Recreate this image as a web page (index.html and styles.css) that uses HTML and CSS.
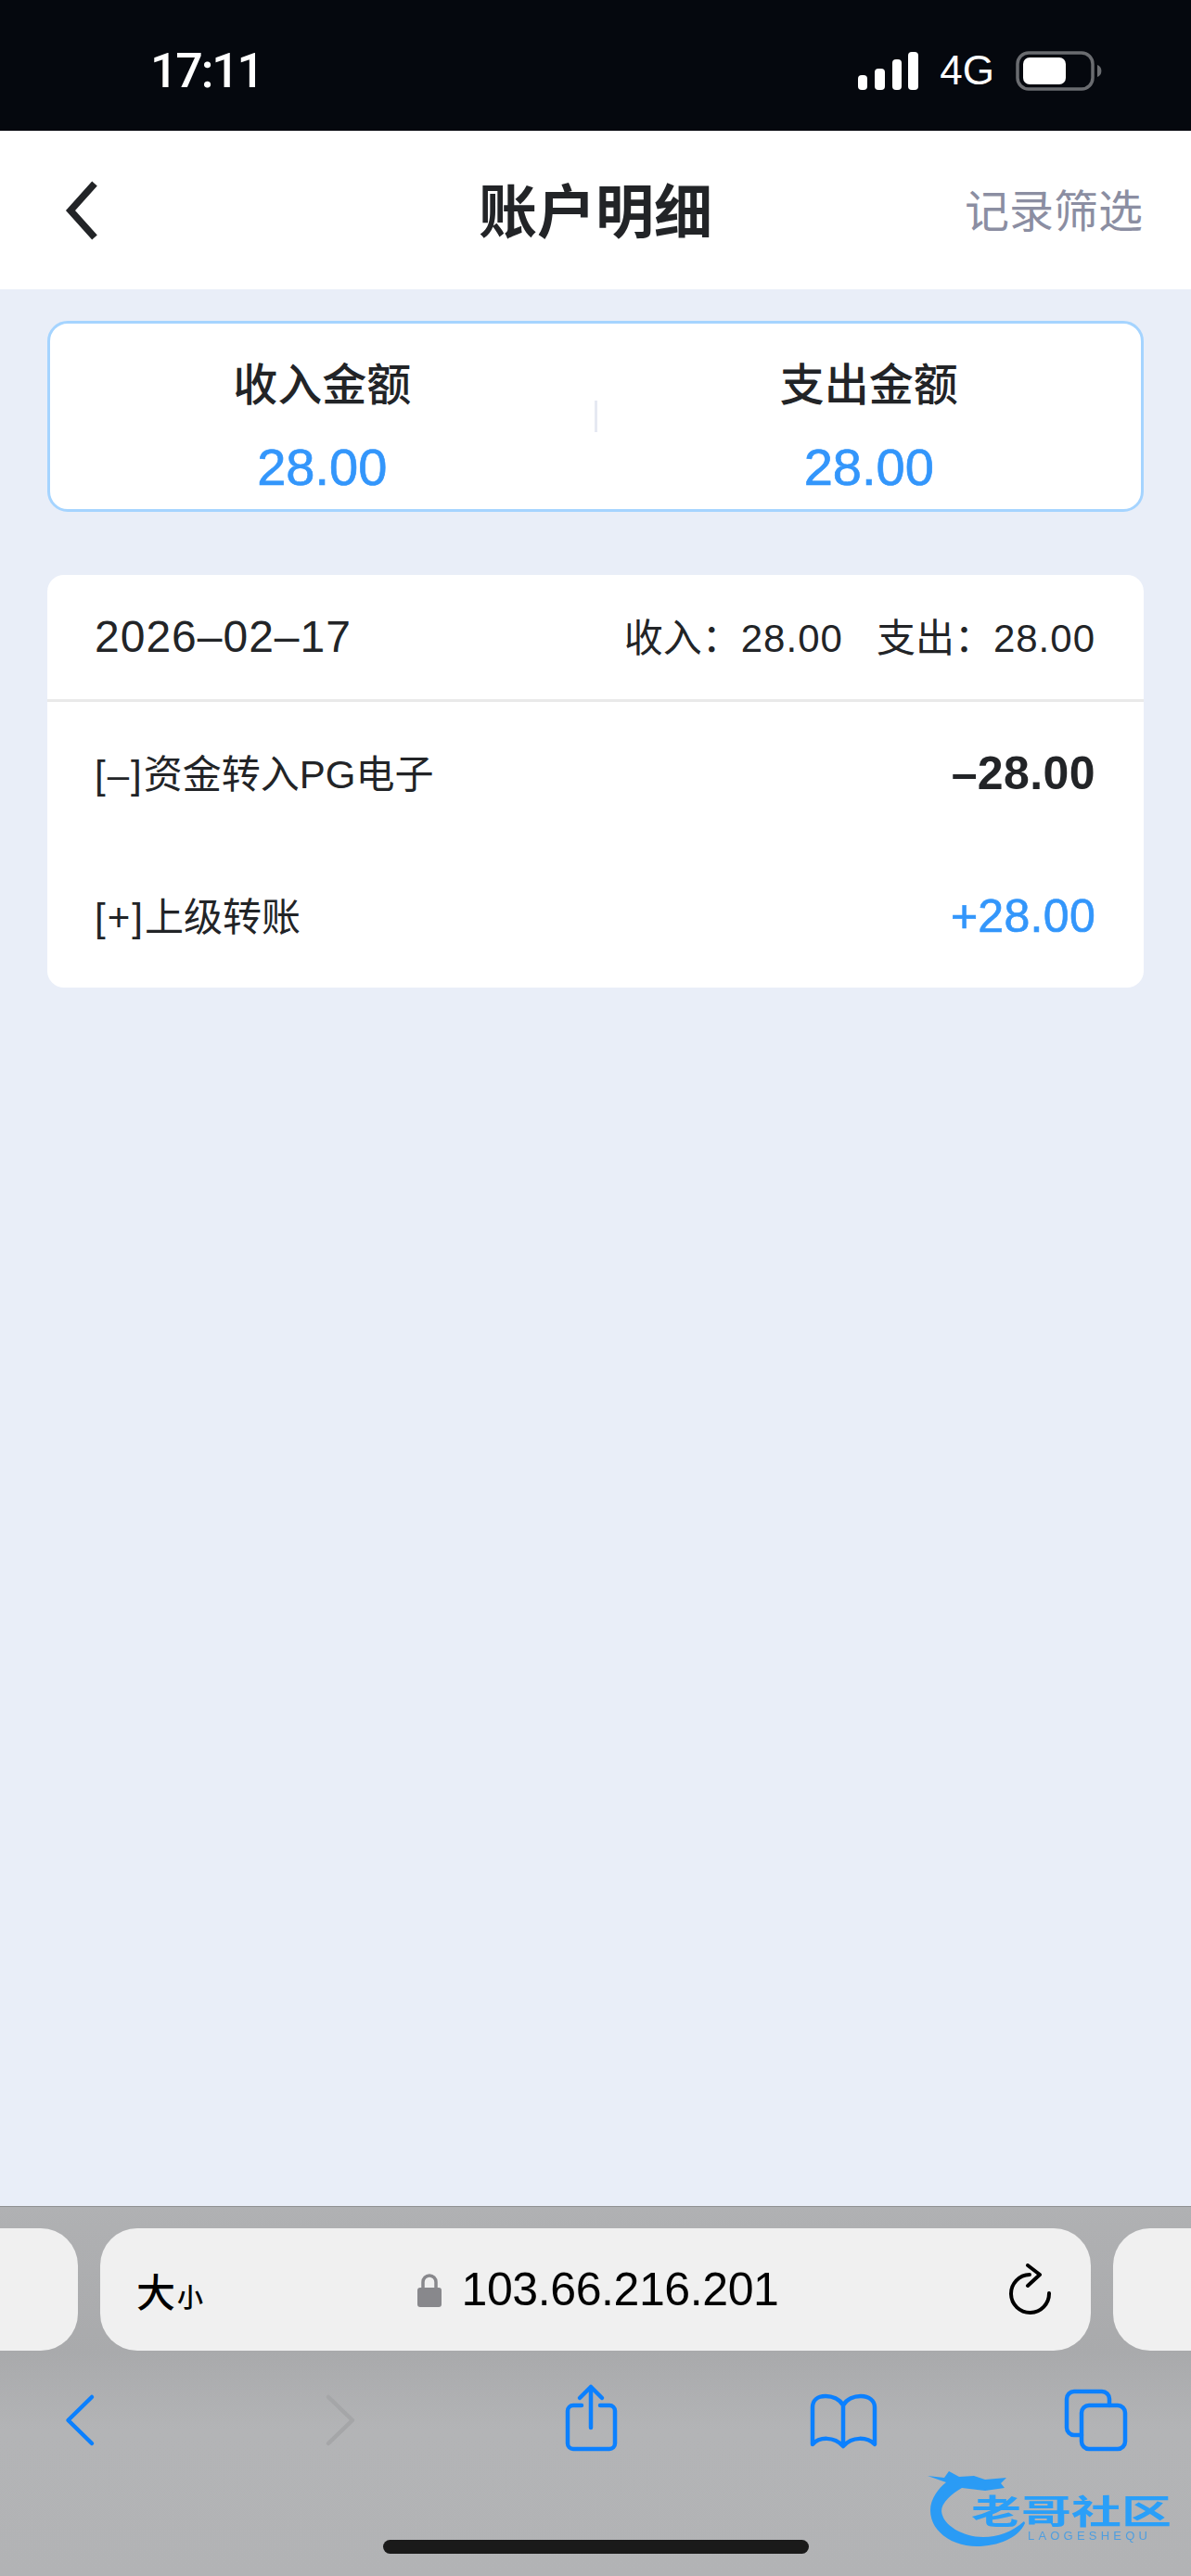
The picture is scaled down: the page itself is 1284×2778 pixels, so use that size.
FILE: index.html
```html
<!DOCTYPE html>
<html lang="zh-CN">
<head>
  <meta charset="UTF-8">
  <meta name="viewport" content="width=device-width, initial-scale=1.0">
  <title>账户明细</title>
  <link rel="stylesheet" href="styles.css">
</head>
<body>
  <div class="status-bar">
    <span class="clock">17:11</span>
    <div class="status-icons">
      <svg width="65" height="41" viewBox="0 0 65 41">
        <rect x="0" y="25" width="10" height="16" rx="4" fill="#fff"/>
        <rect x="18" y="18" width="11" height="23" rx="4" fill="#fff"/>
        <rect x="37" y="8" width="10" height="33" rx="4" fill="#fff"/>
        <rect x="54" y="0" width="11" height="41" rx="4" fill="#fff"/>
      </svg>
      <span class="net">4G</span>
      <svg width="93" height="43" viewBox="0 0 93 43">
        <rect x="2" y="2" width="81" height="39" rx="12" fill="none" stroke="#6a6c70" stroke-width="3.5"/>
        <rect x="8" y="7" width="46" height="29" rx="7" fill="#fff"/>
        <path d="M88 15 a7 7 0 0 1 0 13 z" fill="#6a6c70"/>
      </svg>
    </div>
  </div>

  <div class="nav-bar">
    <svg class="nav-back" width="40" height="66" viewBox="0 0 40 66">
      <path d="M34 4 L8 33 L34 62" fill="none" stroke="#222427" stroke-width="7.5"/>
    </svg>
    <h1 class="nav-title">账户明细</h1>
    <span class="nav-filter">记录筛选</span>
  </div>

  <div class="content">
    <div class="summary">
      <div class="summary-col">
        <div class="summary-label">收入金额</div>
        <div class="summary-num">28.00</div>
      </div>
      <div class="summary-divider"></div>
      <div class="summary-col">
        <div class="summary-label">支出金额</div>
        <div class="summary-num">28.00</div>
      </div>
    </div>

    <div class="detail">
      <div class="detail-head">
        <span class="detail-date">2026–02–17</span>
        <div class="detail-total">
          <span>收入：<b>28.00</b></span>
          <span>支出：<b>28.00</b></span>
        </div>
      </div>
      <div class="detail-row">
        <span class="row-name"><span class="row-tag">[–]</span>资金转入PG电子</span>
        <span class="row-amount minus">–28.00</span>
      </div>
      <div class="detail-row">
        <span class="row-name"><span class="row-tag">[+]</span>上级转账</span>
        <span class="row-amount plus">+28.00</span>
      </div>
    </div>
  </div>

  <div class="toolbar">
    <div class="url-row">
      <div class="url-side left"></div>
      <div class="url-main">
        <div class="text-size"><span class="big">大</span><span class="small">小</span></div>
        <div class="url-text">
          <svg width="26" height="38" viewBox="0 0 26 38">
            <path d="M6 18 V11 a7 7 0 0 1 14 0 V18" fill="none" stroke="#88888c" stroke-width="3.5"/>
            <rect x="0" y="17" width="26" height="21" rx="3" fill="#88888c"/>
          </svg>
          <span class="url">103.66.216.201</span>
        </div>
        <svg class="reload" width="46" height="56" viewBox="0 0 46 56">
          <path d="M22 12 A20.500 20.500 0 1 0 43 32" fill="none" stroke="#000" stroke-width="4" stroke-linecap="round"/>
          <path d="M20 2 L33 12 L20 24" fill="none" stroke="#000" stroke-width="4" stroke-linecap="round" stroke-linejoin="round"/>
        </svg>
      </div>
      <div class="url-side right"></div>
    </div>

    <div class="tool-row">
      <svg width="80" height="80" viewBox="0 0 80 80">
        <path class="tool-line" d="M53 17 L27.500 42 L53 67"/>
      </svg>
      <svg width="80" height="80" viewBox="0 0 80 80">
        <path class="tool-line off" d="M34 17 L60 42 L34 67"/>
      </svg>
      <svg width="80" height="80" viewBox="0 0 80 80">
        <path class="tool-line" d="M33 26 H24 a6 6 0 0 0 -6 6 V67 a6 6 0 0 0 6 6 H63 a6 6 0 0 0 6 -6 V32 a6 6 0 0 0 -6 -6 H53"/>
        <path class="tool-line" d="M43 50 V6 M31 18 L43 6 L55 18"/>
      </svg>
      <svg width="80" height="80" viewBox="0 0 80 80">
        <path class="tool-line" d="M42 69 V26 C38 19 30 16 23 16 C14 16 9 21 9 28 V68 C16 60 32 59 42 70 C52 59 68 60 76 68 V28 C76 21 70 16 61 16 C54 16 46 19 42 26"/>
      </svg>
      <svg width="80" height="80" viewBox="0 0 80 80">
        <path class="tool-line" d="M55 26 V19 a8 8 0 0 0 -8 -8 H17 a8 8 0 0 0 -8 8 V50 a8 8 0 0 0 8 8 H25"/>
        <rect class="tool-line" x="25" y="26" width="47" height="47" rx="8"/>
      </svg>
    </div>

    <div class="home-bar"></div>

    <div class="watermark">
      <svg width="110" height="85" viewBox="0 0 110 85">
        <path d="M0 5 L18 7 L23 0 L34 6 L50 5 L62 9 L85 7 L79 13 L83 18 L62 21 L37 18 C26 24 15 34 15 43 C16 58 38 71 60 71 C76 71 90 66 104 54 L105 56 C98 72 76 81 53 81 C28 81 3 66 3 42 C3 30 12 18 20 12 Z" fill="#2a9bf5"/>
      </svg>
      <span class="mark-name">老哥社区</span>
      <span class="mark-sub">LAOGESHEQU</span>
    </div>
  </div>
</body>
</html>
```

FILE: styles.css
```css
* {
  box-sizing: border-box;
}

body {
  display: flex;
  flex-direction: column;
  width: 1284px;
  height: 2778px;
  margin: 0;
  overflow: hidden;
  font-family: "Liberation Sans", "Noto Sans CJK SC", sans-serif;
  background-color: #e9eef8;
  color: #222427;
}

/* status bar */
.status-bar {
  display: flex;
  justify-content: space-between;
  align-items: center;
  height: 141px;
  padding: 11px 96px 0 162px;
  background-color: #05080e;
  color: #fff;
}

.clock {
  font-family: Roboto, sans-serif;
  font-size: 52px;
  font-weight: 500;
  letter-spacing: -2.2px;
}

.status-icons {
  display: flex;
  align-items: center;
  gap: 23px;
}

.net {
  font-size: 44px;
}

/* nav */
.nav-bar {
  display: grid;
  grid-template-columns: 1fr auto 1fr;
  align-items: center;
  height: 171px;
  padding: 0 52px 6px;
  background-color: #fff;
}

.nav-back {
  margin-left: 16px;
  margin-top: 6px;
}

.nav-title {
  margin: 0;
  font-size: 63px;
  font-weight: 700;
  color: #222427;
}

.nav-filter {
  justify-self: end;
  font-size: 48px;
  color: #8b8ea2;
}

/* page content */
.content {
  flex: 1;
  padding: 34px 51px 0;
}

.summary {
  display: flex;
  align-items: center;
  height: 206px;
  border: 3px solid #a5d4ff;
  border-radius: 22px;
  background-color: #fff;
}

.summary-col {
  flex: 1;
  padding-top: 22px;
  text-align: center;
}

.summary-label {
  font-size: 48px;
  font-weight: 500;
  line-height: 60px;
}

.summary-num {
  margin-top: 28px;
  font-size: 56px;
  line-height: 60px;
  color: #3396fb;
  -webkit-text-stroke: 0.7px #3396fb;
}

.summary-divider {
  width: 3px;
  height: 34px;
  background-color: #e6e9f2;
}

.detail {
  margin-top: 68px;
  border-radius: 18px;
  background-color: #fff;
}

.detail-head {
  display: flex;
  justify-content: space-between;
  align-items: center;
  height: 137px;
  padding: 0 52px 3px 51px;
  border-bottom: 3px solid #e9e9e9;
}

.detail-date {
  padding-top: 2px;
  font-size: 48px;
  letter-spacing: 1px;
}

.detail-total {
  display: flex;
  gap: 36px;
  padding-bottom: 2px;
  font-size: 42px;
}

.detail-total b {
  font-weight: 400;
  letter-spacing: 1px;
}

.detail-row {
  display: flex;
  justify-content: space-between;
  align-items: center;
  height: 154px;
  padding: 0 52px 0 51px;
}

.row-name {
  padding-bottom: 5px;
  font-size: 42px;
}

.row-tag {
  letter-spacing: 2px;
}

.row-amount {
  font-size: 50px;
}

.row-amount.minus {
  font-weight: 700;
  letter-spacing: 0.4px;
}

.row-amount.plus {
  letter-spacing: 0.3px;
  color: #3396fb;
  -webkit-text-stroke: 0.7px #3396fb;
}

/* safari toolbar */
.toolbar {
  position: relative;
  height: 399px;
  padding-top: 23px;
  border-top: 1px solid #8f9092;
  background: linear-gradient(#b0b1b3 0, #a9aaac 157px, #b3b4b6 240px, #b2b3b5 100%);
}

.url-row {
  display: grid;
  grid-template-columns: 84px 1fr 84px;
  gap: 24px;
  height: 132px;
}

.url-side {
  background-color: #f0f0f0;
}

.url-side.left {
  border-radius: 0 40px 40px 0;
}

.url-side.right {
  border-radius: 40px 0 0 40px;
}

.url-main {
  display: grid;
  grid-template-columns: 1fr auto 1fr;
  align-items: center;
  padding: 0 42px 0 39px;
  border-radius: 40px;
  background-color: #f0f0f0;
}

.text-size {
  display: flex;
  align-items: baseline;
  gap: 2px;
  font-weight: 500;
  color: #000;
}

.big {
  font-size: 42px;
}

.small {
  font-size: 28px;
}

.url-text {
  display: flex;
  align-items: center;
  gap: 22px;
  margin-left: 8px;
}

.url {
  font-size: 50px;
  letter-spacing: -0.4px;
  color: #000;
}

.reload {
  justify-self: end;
}

.tool-row {
  display: flex;
  justify-content: space-between;
  margin-top: 33px;
  padding: 0 63px 0 46px;
}

.tool-line {
  fill: none;
  stroke: #0b80ff;
  stroke-width: 4.5;
  stroke-linecap: round;
  stroke-linejoin: round;
}

.tool-line.off {
  stroke: #a5a6a8;
}

.home-bar {
  width: 459px;
  height: 15px;
  margin: 91px auto 0;
  border-radius: 8px;
  background-color: #1a1a1a;
}

/* site watermark lies over the toolbar */
.watermark {
  position: absolute;
  left: 1000px;
  top: 285px;
  width: 270px;
  height: 85px;
  filter: blur(0.7px);
}

.mark-name {
  position: absolute;
  left: 47px;
  top: 26px;
  font-size: 54px;
  font-weight: 700;
  line-height: 54px;
  white-space: nowrap;
  color: #2a9ff8;
  transform: scaleY(0.68);
  transform-origin: top;
}

.mark-sub {
  position: absolute;
  left: 108px;
  top: 62px;
  font-size: 13px;
  letter-spacing: 4.200px;
  white-space: nowrap;
  color: #4d9ee0;
}
```
